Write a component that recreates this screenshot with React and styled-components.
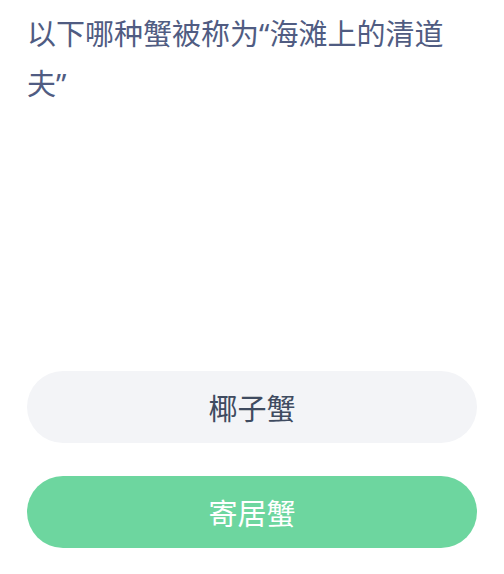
import React from "react";
import styled, { createGlobalStyle } from "styled-components";

const GlobalStyle = createGlobalStyle`
    html, body {
        margin: 0;
        padding: 0;
        background: #ffffff;
    }
    body {
        font-family: "Noto Sans CJK SC", "Noto Sans", sans-serif;
    }
`;

function App() {
    return (
        <>
            <GlobalStyle />
            <Page>
                <Question>以下哪种蟹被称为“海滩上的清道夫”</Question>
                <Options>
                    <Option>椰子蟹</Option>
                    <Option $correct>寄居蟹</Option>
                </Options>
            </Page>
        </>
    );
}

export default App;

const Page = styled.div`
    width: 504px;
    height: 574px;
    box-sizing: border-box;
    padding: 9px 27px 26px;
    display: flex;
    flex-direction: column;
`;

const Question = styled.h1`
    margin: 0;
    max-width: 430px;
    font-family: "Noto Sans", "Noto Sans CJK SC", sans-serif;
    font-size: 29px;
    font-weight: 400;
    line-height: 50px;
    color: #505c82;
`;

const Options = styled.div`
    margin-top: auto;
    display: flex;
    flex-direction: column;
    gap: 33px;
`;

const Option = styled.div`
    height: 72px;
    border-radius: 36px;
    display: flex;
    align-items: center;
    justify-content: center;
    font-size: 29px;
    background: ${(p) => (p.$correct ? "#6dd69f" : "#f3f4f7")};
    color: ${(p) => (p.$correct ? "#ffffff" : "#3f4b60")};
`;
